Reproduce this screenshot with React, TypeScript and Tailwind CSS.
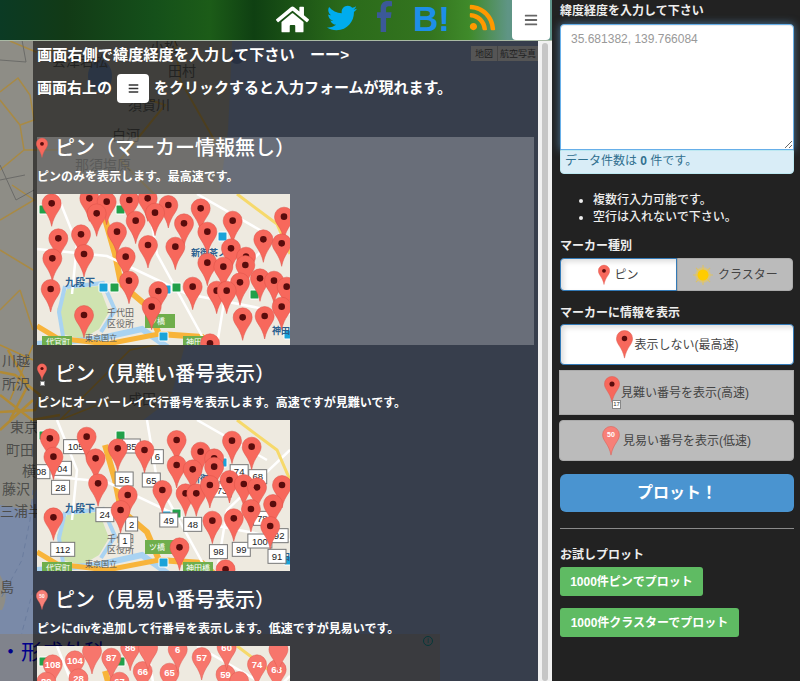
import React from "react";
import { FaHome, FaTwitter, FaRss, FaBars } from "react-icons/fa";

const PIN = "M0 -9.5 a9.5 9.5 0 0 1 9.5 9.5 c0 7 -7 10 -9.5 23 c-2.5 -13 -9.5 -16 -9.5 -23 a9.5 9.5 0 0 1 9.5 -9.5z";

type P = [number, number];
type L = [number, number, string];

const z4 = (a: P[]): P[] => a.map(([x, y]) => [(x - 111) / 3, (y - 12) / 3]);

const pins1 = z4([
  [155, 40], [268, 25], [320, 35], [388, 30], [443, 25], [505, 45], [290, 70], [602, 55], [465, 68], [407, 92], [552, 100], [698, 92],
  [175, 145], [243, 133], [351, 125], [622, 125], [444, 165], [526, 170], [252, 192], [157, 205], [377, 200], [693, 175], [738, 200],
  [790, 148], [852, 80], [845, 160], [622, 218], [670, 230], [736, 225], [780, 265], [822, 272], [860, 290], [387, 272], [578, 290],
  [720, 277], [650, 302], [680, 302], [475, 303], [152, 297], [455, 350], [845, 350], [794, 378], [728, 382], [252, 375], [630, 460],
]);

const to2 = ([x, y]: P): P => [(x - 104) / 2.8, (y + 30) / 3];
const pins2: P[] = ([
  [140, 25], [243, 20], [150, 80], [268, 85], [330, 55], [405, 60], [495, 30], [562, 65], [650, 32], [705, 50], [600, 85], [600, 110],
  [495, 105], [540, 118], [275, 160], [358, 195], [338, 240], [455, 180], [520, 190], [550, 190], [588, 165], [643, 150], [683, 162],
  [720, 172], [790, 165], [765, 222], [703, 237], [595, 272], [655, 265], [757, 288], [503, 352], [632, 418], [150, 262],
] as P[]).map(to2);
const labels2: L[] = ([
  [175, 115, "04"], [212, 50, "105"], [368, 48, "85"], [170, 172, "28"], [348, 147, "55"], [424, 150, "65"], [441, 80, "6"], [294, 254, "24"],
  [369, 282, "2"], [350, 332, "1"], [473, 270, "49"], [540, 283, "48"], [612, 365, "98"], [676, 358, "99"], [728, 333, "100"], [782, 317, "92"],
  [776, 379, "91"], [176, 358, "112"], [622, 180, "73"], [670, 125, "74"], [722, 140, "68"], [115, 125, "08"], [735, 265, "78"],
] as L[]).map(([x, y, t]) => [(x - 104) / 2.8, (y + 30) / 3, t] as L);

const pins3: L[] = ([
  [148, 700, "108"], [210, 688, "104"], [312, 680, "87"], [400, 720, "66"], [475, 725, "65"], [565, 678, "57"], [632, 730, "59"], [720, 700, "74"],
  [775, 715, "68"], [220, 742, "28"], [335, 752, "67"], [130, 752, "89"], [498, 655, "6"], [635, 648, "60"], [258, 660, ""], [365, 650, "86"],
  [415, 650, ""], [780, 655, ""], [670, 750, ""],
] as L[]).map(([x, y, t]) => [(x - 104) / 2.8, (y - 645) / 3, t] as L);

const stations: [number, number, string][] = [
  [2, 11, "#22a04a"], [79, 11, "#22a04a"], [62, 89, "#1aa3d8"], [73, 89, "#22a04a"], [125, 91, "#1aa3d8"], [135, 89, "#22a04a"], [181, 38, "#1aa3d8"], [213, 96, "#22a04a"], [247, 136, "#1aa3d8"], [122, 138, "#1aa3d8"],
];

function MapBase() {
  const t = { fontFamily: "'Noto Sans CJK JP',sans-serif" };
  return (
    <g>
      <rect width="253" height="151" fill="#eeeae0" />
      <path d="M30 95 L62 92 L72 118 L62 135 L45 145 L25 140 L20 115z" fill="#cfe3b0" />
      <path d="M28 92 L22 118 L26 142 M30 93 L66 89 L78 116 L64 138" fill="none" stroke="#a9d3f2" strokeWidth="4" />
      <path d="M0 150 L60 145 L105 135 L140 160" fill="none" stroke="#a9d3f2" strokeWidth="6" />
      <path d="M68 25 L78 60 L84 90 L110 112 L122 140 M122 140 L165 143 L195 170" fill="none" stroke="#f8b43a" strokeWidth="6" />
      <path d="M0 132 L20 144 L70 150 L122 140" fill="none" stroke="#f8b43a" strokeWidth="5" />
      <path d="M160 0 L230 40 M20 0 L40 50 L35 100 M0 55 L70 62 L150 100 L253 120 M110 0 L120 60 L170 151 M253 30 L190 90 L180 151" fill="none" stroke="#ffffff" strokeWidth="2.5" />
      <path d="M200 0 L240 30 L253 60" fill="none" stroke="#f6d96b" strokeWidth="3" />
      <rect x="5" y="142" width="30" height="12" fill="#6fae4c" />
      <rect x="146" y="142" width="30" height="12" fill="#6fae4c" />
      <rect x="108" y="120" width="30" height="14" fill="#6fae4c" />
      {stations.map(([x, y, c]) => (
        <rect key={`${x}-${y}`} x={x} y={y} width="9" height="9" rx="1" fill={c} stroke="#fff" strokeWidth="1" />
      ))}
      <text x="9" y="151" fontSize="8" fill="#fff" style={t}>代官町</text>
      <text x="149" y="151" fontSize="8" fill="#fff" style={t}>神田橋</text>
      <text x="112" y="130" fontSize="8" fill="#fff" style={t}>ツ橋</text>
      <text x="28" y="92" fontSize="10" fontWeight="700" fill="#2b5f8f" style={t}>九段下</text>
      <text x="70" y="122" fontSize="9" fill="#666" style={t}>千代田</text>
      <text x="70" y="133" fontSize="9" fill="#666" style={t}>区役所</text>
      <text x="48" y="147" fontSize="8" fill="#555" style={t}>東京国立</text>
      <text x="154" y="62" fontSize="9" fontWeight="700" fill="#2b5f8f" style={t}>新御茶ノ水</text>
      <text x="235" y="140" fontSize="9" fontWeight="700" fill="#2b5f8f" style={t}>神田</text>
    </g>
  );
}

function Thumb({ children }: { children: React.ReactNode }) {
  return (
    <svg viewBox="0 0 253 151" className="block w-[253px] h-[151px] mt-[10px] shrink-0 overflow-hidden">
      <MapBase />
      {children}
    </svg>
  );
}

function RedPin({ x, y }: { x: number; y: number }) {
  return (
    <g transform={`translate(${x} ${y})`}>
      <path d={PIN} fill="#f7685c" stroke="#dc5348" strokeWidth="0.5" />
      <circle r="3.3" fill="#5a0c0c" />
    </g>
  );
}

function Marker({ w, h, text, light }: { w: number; h: number; text?: string; light?: boolean }) {
  return (
    <svg viewBox="-10 -10 20 34" width={w} height={h} className="shrink-0">
      <path d={PIN} fill={light ? "#f78078" : "#f7685c"} stroke="#dd5a50" strokeWidth="0.6" />
      {text ? (
        <text textAnchor="middle" y="3" fontSize="8" fontWeight="700" fill="#fff" fontFamily="'Liberation Sans',sans-serif">{text}</text>
      ) : (
        <circle r="3.2" fill="#5a0c0c" />
      )}
    </svg>
  );
}

function Section({ icon, title, desc, children }: { icon: React.ReactNode; title: string; desc: string; children: React.ReactNode }) {
  return (
    <>
      <div className="h-[24px] pb-[2px] flex items-center gap-[8px] text-[20px] font-medium text-white leading-none shrink-0">
        <span className="w-[10px] flex justify-center">{icon}</span>
        <span>{title}</span>
      </div>
      <p className="mt-[7px] h-[16px] text-[12px] leading-[18px] font-bold text-white">{desc}</p>
      {children}
    </>
  );
}

function BackgroundMap() {
  const t = { fontFamily: "'Noto Sans CJK JP',sans-serif" };
  const labels: L[] = [
    [52, 66, "会津若松"], [168, 76, "田村"], [128, 110, "須賀川"], [112, 140, "白河"], [75, 170, "那須塩原"], [150, 52, "小松"],
    [2, 366, "川越"], [2, 389, "所沢"], [10, 432, "東京"], [6, 455, "町田"], [22, 476, "横浜"], [2, 494, "藤沢"], [0, 516, "三浦半島"], [0, 592, "島"], [128, 404, "成田"],
  ];
  return (
    <svg viewBox="0 41 552 640" className="absolute inset-0 w-[552px] h-[640px]">
      <rect x="0" y="41" width="552" height="640" fill="#7a8aa8" />
      <path d="M0 41 L232 41 L230 90 L228 130 L222 175 L215 240 L195 300 L185 345 L170 400 L130 430 L80 460 L36 490 L30 510 L0 505z" fill="#8e8d86" />
      <circle cx="237" cy="57" r="7" fill="#5a6c90" />
      <ellipse cx="100" cy="76" rx="12" ry="16" fill="#5f7598" />
      <path d="M0 575 C6 585 8 600 2 610 L0 610z" fill="#8e8d86" />
      <g fill="none" stroke="#a98a44" strokeWidth="1.5">
        <path d="M10 41 L36 52 L60 50 M0 92 L18 78 L30 95 L34 120 L20 125 L0 100 M20 125 L24 150 L0 170 M24 150 L60 150" />
        <path d="M150 100 L165 105 L120 160 L160 200 L205 260 M175 41 L180 80 L220 150" strokeWidth="2" />
        <path d="M12 185 L34 200 L0 220 M0 250 L33 270 M20 290 L33 330 M0 310 L20 290" />
      </g>
      <g fill="none" stroke="#b18a35" strokeWidth="2.5">
        <path d="M0 372 L15 375 L40 395 L35 410 L0 412 M8 350 L28 385 L10 420 M0 395 L32 420 L60 415 M0 430 L33 400" />
        <path d="M60 420 L130 350 L180 340 M60 420 L110 400" strokeWidth="1.5" />
        <path d="M0 345 L33 360 M33 345 L10 400" strokeWidth="1.5" />
      </g>
      <g fill="none" stroke="#6b6b68" strokeWidth="1">
        <path d="M0 60 L26 62 L22 40 M0 165 L16 200 L34 190 M0 180 L25 175" />
        <path d="M33 490 L30 520 L22 560 L0 600 M33 590 L20 640" stroke="#6a7c9e" strokeDasharray="5 4" />
      </g>
      {labels.map(([x, y, s]) => (
        <text key={s} x={x} y={y} fontSize="14" fill="#4d4d4b" style={t}>{s}</text>
      ))}
    </svg>
  );
}

export default function App() {
  return (
    <div className="flex w-[800px] h-[681px] overflow-hidden bg-[#222222] font-['Liberation_Sans','Noto_Sans_CJK_JP',sans-serif]">
      <div className="w-[552px] h-full flex flex-col shrink-0">
        <header className="h-[41px] shrink-0 flex items-start justify-end pr-[2px] border-b border-[#a9b9a4] bg-[linear-gradient(90deg,#0b3a24_0%,#123a16_12%,#15501a_28%,#1c5c18_38%,#0f4012_46%,#2a6a1a_62%,#34751f_78%,#3f8a2a_85%,#5f9585_92%,#60948a_100%)]">
          <FaHome className="mt-[3px] text-white" size={33} />
          <FaTwitter className="ml-[18px] mt-[3px] text-[#00aced]" size={30} />
          <svg viewBox="0 0 16 33" className="ml-[20px] w-[15px] h-[33px]" fill="#3b5998">
            <path d="M9.7 33V18h5l.8-6H9.7V8.4c0-1.7.5-2.9 2.9-2.9H16V.3C15.4.2 13.6 0 11.5 0 7 0 3.9 2.7 3.9 7.8V12H0v6h3.9v15z" />
          </svg>
          <span className="ml-[21px] mt-[-1px] text-[35px] leading-[40px] font-bold text-[#1d8fe8]">B!</span>
          <FaRss className="ml-[18px] mt-[3px] text-[#ff9900]" size={29} />
          <div className="ml-[15px] w-[38px] h-[40px] bg-white rounded-b-[4px] flex items-center justify-center text-[#666]">
            <FaBars size={14} />
          </div>
        </header>

        <main className="relative flex-1 flex min-h-0 overflow-hidden">
          <BackgroundMap />
          <div className="absolute left-0 top-[593px] w-[440px] h-[47px] bg-[#80838c] overflow-hidden">
            <span className="absolute left-0 top-[1px] text-[21px] leading-[30px] text-[#00008b] font-['Noto_Sans_CJK_JP',sans-serif]">・形成外科</span>
            <span className="absolute left-[423px] top-[2px] w-[10px] h-[10px] rounded-full border border-[#0f7c80] text-[8px] leading-[8px] text-center text-[#0f7c80]">i</span>
          </div>

          <div className="relative ml-[33px] w-[505px] h-full bg-black/55 overflow-hidden pl-[4px] flex flex-col shrink-0">
            <div className="absolute right-0 top-[5px] flex text-[9px] leading-[15px] text-[#222] font-['Noto_Sans_CJK_JP',sans-serif]">
              <span className="w-[27px] h-[15px] bg-[#555555] text-center border-r border-[#444]">地図</span>
              <span className="w-[40px] h-[15px] bg-[#555555] text-center overflow-hidden">航空写真</span>
            </div>

            <p className="h-[28px] leading-[28px] text-[15.2px] font-bold text-white shrink-0">画面右側で緯度経度を入力して下さい　ーー&gt;</p>
            <div className="mt-[3px] h-[32px] flex items-center text-[15px] font-bold text-white shrink-0">
              <span>画面右上の</span>
              <span className="mx-[5px] w-[32px] h-[29px] bg-white rounded-[4px] flex items-center justify-center text-[#333]">
                <FaBars size={11} />
              </span>
              <span>をクリックすると入力フォームが現れます。</span>
            </div>

            <section className="mt-[33px] w-[497px] h-[208px] bg-white/25 shrink-0">
              <Section icon={<Marker w={12} h={22} />} title="ピン（マーカー情報無し）" desc="ピンのみを表示します。最高速です。">
                <Thumb>
                  {pins1.map(([x, y], i) => (
                    <RedPin key={i} x={x} y={y} />
                  ))}
                </Thumb>
              </Section>
            </section>

            <section className="mt-[18px] shrink-0">
              <Section
                icon={
                  <span className="flex flex-col items-center">
                    <Marker w={10} h={18} />
                    <span className="w-[5px] h-[5px] bg-white border border-[#888]" />
                  </span>
                }
                title="ピン（見難い番号表示）"
                desc="ピンにオーバーレイで行番号を表示します。高速ですが見難いです。"
              >
                <Thumb>
                  {labels2.map(([x, y, s], i) => (
                    <g key={i} transform={`translate(${x} ${y})`}>
                      <rect x={-(s.length * 3 + 3)} y="-7" width={s.length * 6 + 6} height="14" fill="#fff" stroke="#777" strokeWidth="1" />
                      <text textAnchor="middle" y="3.5" fontSize="9.5" fill="#222" fontFamily="'Liberation Sans',sans-serif">{s}</text>
                    </g>
                  ))}
                  {pins2.map(([x, y], i) => (
                    <RedPin key={i} x={x} y={y} />
                  ))}
                </Thumb>
              </Section>
            </section>

            <section className="mt-[18px] shrink-0">
              <Section icon={<Marker w={12} h={22} text="50" light />} title="ピン（見易い番号表示）" desc="ピンにdivを追加して行番号を表示します。低速ですが見易いです。">
                <Thumb>
                  {pins3.map(([x, y, s], i) => (
                    <g key={i} transform={`translate(${x} ${y})`}>
                      <path d={PIN} fill="#f7766c" stroke="#dd5a50" strokeWidth="0.5" />
                      <text textAnchor="middle" y="3.5" fontSize="9.5" fontWeight="700" fill="#fff" fontFamily="'Liberation Sans',sans-serif">{s}</text>
                    </g>
                  ))}
                </Thumb>
              </Section>
            </section>
          </div>

          <div className="relative w-[14px] h-full bg-[#f1f1f1] pl-[4px] pr-[4px] pt-[2px] shrink-0">
            <div className="w-[6px] h-full rounded-full bg-[#c6c6c6]" />
          </div>
        </main>
      </div>

      <aside className="w-[248px] h-full pl-[8px] pr-[6px] shrink-0 text-[12px] text-[#eeeeee]">
        <h3 className="mt-[2px] h-[16px] leading-[18px] font-bold">緯度経度を入力して下さい</h3>
        <textarea
          placeholder="35.681382, 139.766084"
          className="block mt-[6px] w-[234px] h-[126px] px-[10px] py-[6px] bg-white text-[12px] leading-[17px] text-[#333] placeholder:text-[#999] border border-[#66afe9] rounded-t-[4px] shadow-[inset_0_1px_1px_rgba(0,0,0,0.075),0_0_8px_rgba(102,175,233,0.6)] outline-none"
        />
        <div className="h-[24px] pl-[4px] leading-[21px] bg-[#d9edf7] border border-[#bce8f1] rounded-b-[4px] text-[#31708f]">
          データ件数は <b>0</b> 件です。
        </div>
        <ul className="mt-[17px] list-disc pl-[33px] font-medium">
          <li className="h-[17px] leading-[19px]">複数行入力可能です。</li>
          <li className="h-[17px] leading-[19px]">空行は入れないで下さい。</li>
        </ul>
        <h3 className="mt-[12px] h-[16px] leading-[18px] font-bold">マーカー種別</h3>
        <div className="mt-[5px] h-[33px] flex text-[#444]">
          <button className="w-[117px] h-full flex items-center justify-center gap-[4px] bg-white border border-[#337ab7] rounded-l-[4px] shadow-[inset_3px_3px_5px_rgba(0,0,0,0.125)]">
            <Marker w={12} h={22} />
            <span>ピン</span>
          </button>
          <button className="w-[116px] h-full flex items-center justify-center gap-[4px] bg-[#bbbbbb] border border-[#aaaaaa] rounded-r-[4px]">
            <svg viewBox="0 0 20 20" width="22" height="22">
              <g stroke="#e5c552" strokeWidth="1" opacity="0.8">
                <path d="M10 1v18M1 10h18M3.6 3.6l12.8 12.8M16.4 3.6L3.6 16.4" />
              </g>
              <circle cx="10" cy="10" r="7" fill="#e9c85a" opacity="0.6" />
              <circle cx="10" cy="10" r="5" fill="#ffcc00" />
            </svg>
            <span>クラスター</span>
          </button>
        </div>
        <h3 className="mt-[13px] h-[16px] leading-[18px] font-bold">マーカーに情報を表示</h3>
        <button className="block mt-[4px] w-[234px] h-[41px] bg-white border border-[#337ab7] rounded-[4px] text-[#444] shadow-[inset_3px_3px_5px_rgba(0,0,0,0.125)]">
          <span className="flex items-center justify-center gap-[2px]">
            <Marker w={17} h={29} />
            <span>表示しない(最高速)</span>
          </span>
        </button>
        <button className="block mt-[5px] ml-[-1px] w-[235px] h-[45px] bg-[#bbbbbb] border border-[#aaaaaa] text-[#444]">
          <span className="flex items-center justify-center gap-[1px]">
            <span className="relative flex flex-col items-center mb-[6px]">
              <Marker w={16} h={27} />
              <span className="absolute left-[8px] top-[24px] w-[9px] h-[9px] bg-white border border-[#888] text-[6px] leading-[7px] text-[#333]">17</span>
            </span>
            <span>見難い番号を表示(高速)</span>
          </span>
        </button>
        <button className="block mt-[5px] ml-[-1px] w-[235px] h-[41px] bg-[#bbbbbb] border border-[#aaaaaa] rounded-[4px] text-[#444]">
          <span className="flex items-center justify-center gap-[3px]">
            <Marker w={18} h={30} text="50" light />
            <span>見易い番号を表示(低速)</span>
          </span>
        </button>
        <button className="block mt-[13px] w-[234px] h-[38px] bg-[#4a94d0] rounded-[6px] text-[16px] font-bold text-white">プロット！</button>
        <hr className="mt-[16px] border-0 h-[1px] bg-[#8a8a8a]" />
        <h3 className="mt-[17px] h-[16px] leading-[18px] font-bold">お試しプロット</h3>
        <button className="block mt-[5px] w-[143px] h-[29px] bg-[#5fbb63] rounded-[3px] font-bold text-white">1000件ピンでプロット</button>
        <button className="block mt-[12px] w-[179px] h-[29px] bg-[#5fbb63] rounded-[3px] font-bold text-white">1000件クラスターでプロット</button>
      </aside>
    </div>
  );
}
